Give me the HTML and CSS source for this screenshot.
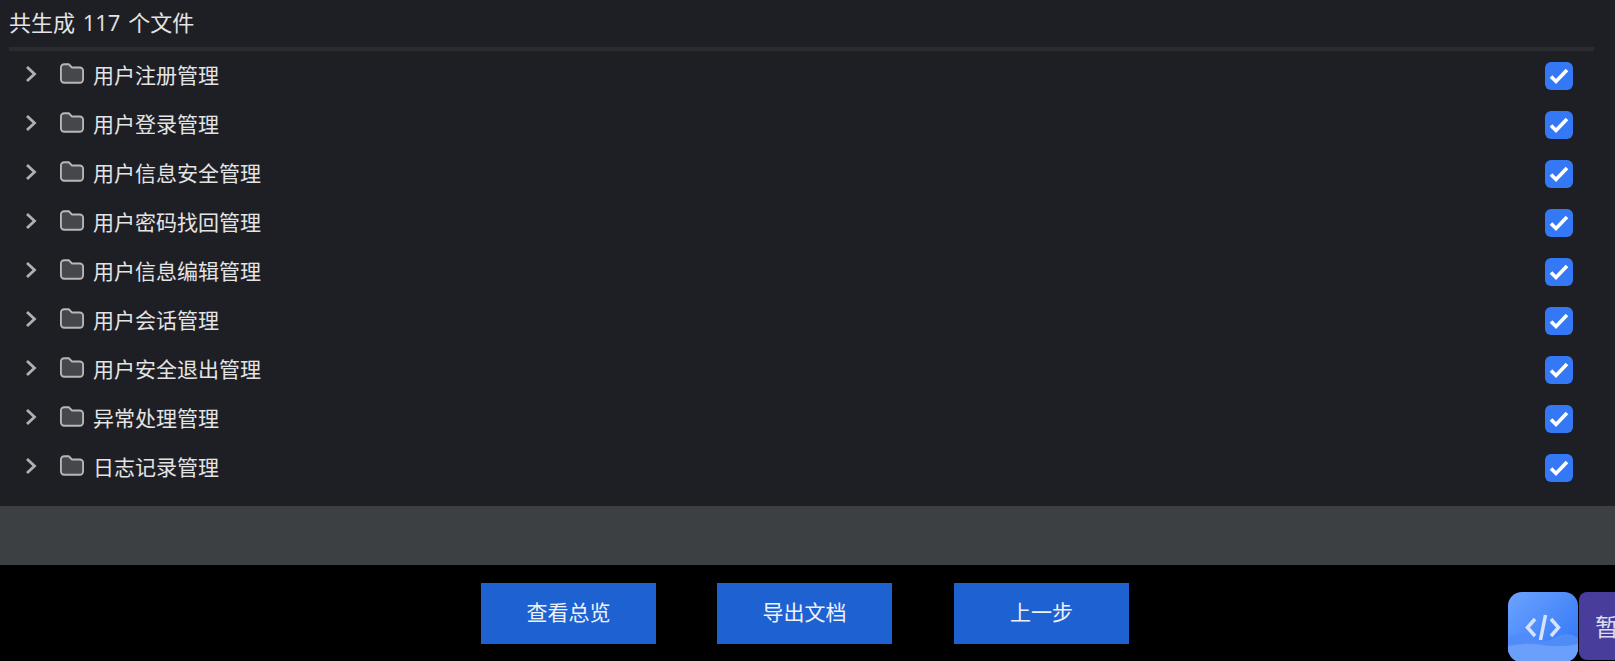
FILE: index.html
```html
<!DOCTYPE html>
<html lang="zh-CN">
<head>
  <meta charset="UTF-8" />
  <meta name="viewport" content="width=device-width, initial-scale=1.0"/>
  <title>生成结果</title>
  <link rel="stylesheet" href="styles.css">
</head>
<body>

  <!-- 文件列表 -->
  <div class="panel">
    <div class="summary">共生成 117 个文件</div>
    <div class="tree">
      <div class="row">
        <svg class="arrow" viewBox="0 0 12 18"><path d="M2 2l7.500 7-7.500 7"/></svg>
        <svg class="folder" viewBox="0 0 26 22"><path d="M1 4.500a3.500 3.500 0 0 1 3.500-3.500h5l3.500 3.500h8.500a3.500 3.500 0 0 1 3.500 3.500v9.500a3.500 3.500 0 0 1-3.500 3.500h-17a3.500 3.500 0 0 1-3.500-3.500z"/></svg>
        <span class="name">用户注册管理</span>
        <svg class="check" viewBox="0 0 28 28"><rect width="28" height="28" rx="6"/><path d="M6 14.500l5 5 11-11.500"/></svg>
      </div>
      <div class="row">
        <svg class="arrow" viewBox="0 0 12 18"><path d="M2 2l7.500 7-7.500 7"/></svg>
        <svg class="folder" viewBox="0 0 26 22"><path d="M1 4.500a3.500 3.500 0 0 1 3.500-3.500h5l3.500 3.500h8.500a3.500 3.500 0 0 1 3.500 3.500v9.500a3.500 3.500 0 0 1-3.500 3.500h-17a3.500 3.500 0 0 1-3.500-3.500z"/></svg>
        <span class="name">用户登录管理</span>
        <svg class="check" viewBox="0 0 28 28"><rect width="28" height="28" rx="6"/><path d="M6 14.500l5 5 11-11.500"/></svg>
      </div>
      <div class="row">
        <svg class="arrow" viewBox="0 0 12 18"><path d="M2 2l7.500 7-7.500 7"/></svg>
        <svg class="folder" viewBox="0 0 26 22"><path d="M1 4.500a3.500 3.500 0 0 1 3.500-3.500h5l3.500 3.500h8.500a3.500 3.500 0 0 1 3.500 3.500v9.500a3.500 3.500 0 0 1-3.500 3.500h-17a3.500 3.500 0 0 1-3.500-3.500z"/></svg>
        <span class="name">用户信息安全管理</span>
        <svg class="check" viewBox="0 0 28 28"><rect width="28" height="28" rx="6"/><path d="M6 14.500l5 5 11-11.500"/></svg>
      </div>
      <div class="row">
        <svg class="arrow" viewBox="0 0 12 18"><path d="M2 2l7.500 7-7.500 7"/></svg>
        <svg class="folder" viewBox="0 0 26 22"><path d="M1 4.500a3.500 3.500 0 0 1 3.500-3.500h5l3.500 3.500h8.500a3.500 3.500 0 0 1 3.500 3.500v9.500a3.500 3.500 0 0 1-3.500 3.500h-17a3.500 3.500 0 0 1-3.500-3.500z"/></svg>
        <span class="name">用户密码找回管理</span>
        <svg class="check" viewBox="0 0 28 28"><rect width="28" height="28" rx="6"/><path d="M6 14.500l5 5 11-11.500"/></svg>
      </div>
      <div class="row">
        <svg class="arrow" viewBox="0 0 12 18"><path d="M2 2l7.500 7-7.500 7"/></svg>
        <svg class="folder" viewBox="0 0 26 22"><path d="M1 4.500a3.500 3.500 0 0 1 3.500-3.500h5l3.500 3.500h8.500a3.500 3.500 0 0 1 3.500 3.500v9.500a3.500 3.500 0 0 1-3.500 3.500h-17a3.500 3.500 0 0 1-3.500-3.500z"/></svg>
        <span class="name">用户信息编辑管理</span>
        <svg class="check" viewBox="0 0 28 28"><rect width="28" height="28" rx="6"/><path d="M6 14.500l5 5 11-11.500"/></svg>
      </div>
      <div class="row">
        <svg class="arrow" viewBox="0 0 12 18"><path d="M2 2l7.500 7-7.500 7"/></svg>
        <svg class="folder" viewBox="0 0 26 22"><path d="M1 4.500a3.500 3.500 0 0 1 3.500-3.500h5l3.500 3.500h8.500a3.500 3.500 0 0 1 3.500 3.500v9.500a3.500 3.500 0 0 1-3.500 3.500h-17a3.500 3.500 0 0 1-3.500-3.500z"/></svg>
        <span class="name">用户会话管理</span>
        <svg class="check" viewBox="0 0 28 28"><rect width="28" height="28" rx="6"/><path d="M6 14.500l5 5 11-11.500"/></svg>
      </div>
      <div class="row">
        <svg class="arrow" viewBox="0 0 12 18"><path d="M2 2l7.500 7-7.500 7"/></svg>
        <svg class="folder" viewBox="0 0 26 22"><path d="M1 4.500a3.500 3.500 0 0 1 3.500-3.500h5l3.500 3.500h8.500a3.500 3.500 0 0 1 3.500 3.500v9.500a3.500 3.500 0 0 1-3.500 3.500h-17a3.500 3.500 0 0 1-3.500-3.500z"/></svg>
        <span class="name">用户安全退出管理</span>
        <svg class="check" viewBox="0 0 28 28"><rect width="28" height="28" rx="6"/><path d="M6 14.500l5 5 11-11.500"/></svg>
      </div>
      <div class="row">
        <svg class="arrow" viewBox="0 0 12 18"><path d="M2 2l7.500 7-7.500 7"/></svg>
        <svg class="folder" viewBox="0 0 26 22"><path d="M1 4.500a3.500 3.500 0 0 1 3.500-3.500h5l3.500 3.500h8.500a3.500 3.500 0 0 1 3.500 3.500v9.500a3.500 3.500 0 0 1-3.500 3.500h-17a3.500 3.500 0 0 1-3.500-3.500z"/></svg>
        <span class="name">异常处理管理</span>
        <svg class="check" viewBox="0 0 28 28"><rect width="28" height="28" rx="6"/><path d="M6 14.500l5 5 11-11.500"/></svg>
      </div>
      <div class="row">
        <svg class="arrow" viewBox="0 0 12 18"><path d="M2 2l7.500 7-7.500 7"/></svg>
        <svg class="folder" viewBox="0 0 26 22"><path d="M1 4.500a3.500 3.500 0 0 1 3.500-3.500h5l3.500 3.500h8.500a3.500 3.500 0 0 1 3.500 3.500v9.500a3.500 3.500 0 0 1-3.500 3.500h-17a3.500 3.500 0 0 1-3.500-3.500z"/></svg>
        <span class="name">日志记录管理</span>
        <svg class="check" viewBox="0 0 28 28"><rect width="28" height="28" rx="6"/><path d="M6 14.500l5 5 11-11.500"/></svg>
      </div>
    </div>
  </div>

  <div class="band"></div>

  <!-- 底部按钮 -->
  <div class="actions">
    <button class="btn">查看总览</button>
    <button class="btn">导出文档</button>
    <button class="btn">上一步</button>
  </div>

  <!-- 右下角浮动按钮 -->
  <div class="float-code">
    <svg viewBox="0 0 70 70">
      <path class="hump" d="M0 46q10-7 20-2q8 5 15 5t15-5q10-5 20 2v24H0z"/>
      <path class="wave" d="M0 54q17-4 35-1t35-1v18H0z"/>
      <path class="code" d="M27 27l-7.500 8.500 7.500 8.500M43 27l7.500 8.500-7.500 8.500M37.500 23l-5 25"/>
    </svg>
  </div>
  <div class="float-pause">暂</div>

</body>
</html>
```

FILE: styles.css
```css
:root {
  --panel-color: #1e1f24;
  --band-color: #3c4043;
  --btn-color: #1e61d0;
  --check-color: #3578f6;
  --text-color: #e4e4e4;
}

html, body {
  height: 100%;
}

body {
  margin: 0;
  background-color: #000;
  color: var(--text-color);
  font-family: "Noto Sans CJK SC", "Noto Sans", sans-serif;
  overflow: hidden;
}

.panel {
  height: 506px;
  box-sizing: border-box;
  background-color: var(--panel-color);
  padding: 0 21px 0 9px;
}

.summary {
  height: 47px;
  line-height: 44px;
  font-family: "Open Sans", "Noto Sans CJK SC", sans-serif;
  font-size: 22px;
  word-spacing: 2px;
}

.tree {
  border-top: 4px solid #2b2c30;
}

.row {
  display: flex;
  align-items: center;
  height: 49px;
  padding: 0 21px 0 16px;
}

.arrow {
  width: 12px;
  height: 18px;
  margin-top: -3px;
  fill: none;
  stroke: #b0b0b0;
  stroke-width: 2.800;
}

.folder {
  width: 24px;
  height: 21px;
  margin: -4px 0 0 23px;
  fill: #46474c;
  stroke: #b8b8b8;
  stroke-width: 2;
}

.name {
  margin: -4px 0 0 9px;
  font-size: 21px;
  flex: 1;
}

.check {
  width: 28px;
  height: 28px;
  fill: var(--check-color);
}

.check path {
  fill: none;
  stroke: #fff;
  stroke-width: 3.600;
}

.band {
  height: 59px;
  background-color: var(--band-color);
}

.actions {
  display: flex;
  justify-content: center;
  gap: 61px;
  padding: 18px 5px 0 0;
}

.btn {
  width: 175px;
  height: 61px;
  padding: 0 0 5px;
  background-color: var(--btn-color);
  color: #eef2fa;
  border: none;
  font-family: inherit;
  font-size: 21px;
  cursor: pointer;
}

.btn:last-child {
  margin-left: 1px;
}

.float-code {
  position: absolute;
  left: 1508px;
  top: 592px;
  width: 70px;
  height: 70px;
  border-radius: 14px;
  overflow: hidden;
  background: linear-gradient(135deg, #6ca3ff, #2c72f6);
}

.float-code svg {
  display: block;
  width: 70px;
  height: 70px;
}

.hump {
  fill: #4f8cf8;
}

.wave {
  fill: #6aa0fb;
}

.code {
  fill: none;
  stroke: #d5e3fb;
  stroke-width: 3.500;
}

.float-pause {
  position: absolute;
  left: 1579px;
  top: 592px;
  width: 36px;
  height: 68px;
  box-sizing: border-box;
  padding-left: 16px;
  border-radius: 8px 0 0 8px;
  background-color: #483d9b;
  color: #dcdcec;
  font-size: 24px;
  line-height: 68px;
  white-space: nowrap;
}
```
